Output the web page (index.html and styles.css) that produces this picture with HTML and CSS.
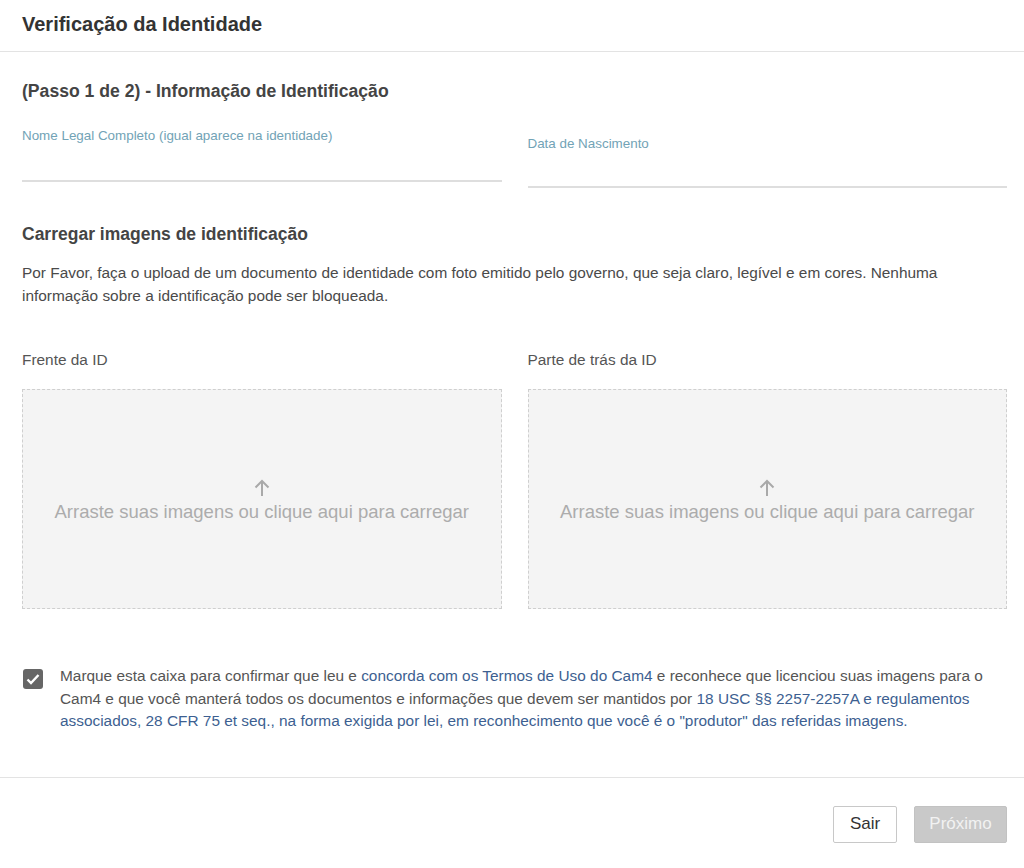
FILE: index.html
```html
<!DOCTYPE html>
<html lang="pt">
<head>
    <meta charset="utf-8">
    <title>Verificação da Identidade</title>
    <link rel="stylesheet" href="styles.css">
</head>
<body>
    <div class="modal-header">
        <h1>Verificação da Identidade</h1>
    </div>

    <div class="modal-body">
        <h2 class="step-title">(Passo 1 de 2) - Informação de Identificação</h2>

        <div class="field-row">
            <div class="field">
                <label class="field-label">Nome Legal Completo (igual aparece na identidade)</label>
                <input class="field-input" type="text">
            </div>
            <div class="field field-date">
                <label class="field-label">Data de Nascimento</label>
                <input class="field-input" type="text">
            </div>
        </div>

        <h2 class="section-title">Carregar imagens de identificação</h2>
        <p class="intro">Por Favor, faça o upload de um documento de identidade com foto emitido pelo governo, que seja claro, legível e em cores. Nenhuma informação sobre a identificação pode ser bloqueada.</p>

        <div class="upload-row">
            <div class="upload">
                <div class="upload-label">Frente da ID</div>
                <div class="dropzone">
                    <svg class="upload-icon" width="20" height="20" viewBox="0 0 20 20">
                        <path d="M10 18V3M3.5 9.5L10 3l6.5 6.5" fill="none" stroke="#a9a9a9" stroke-width="2"/>
                    </svg>
                    <span>Arraste suas imagens ou clique aqui para carregar</span>
                </div>
            </div>
            <div class="upload">
                <div class="upload-label">Parte de trás da ID</div>
                <div class="dropzone">
                    <svg class="upload-icon" width="20" height="20" viewBox="0 0 20 20">
                        <path d="M10 18V3M3.5 9.5L10 3l6.5 6.5" fill="none" stroke="#a9a9a9" stroke-width="2"/>
                    </svg>
                    <span>Arraste suas imagens ou clique aqui para carregar</span>
                </div>
            </div>
        </div>

        <div class="agree">
            <span class="checkbox">
                <svg width="16" height="16" viewBox="0 0 16 16">
                    <path d="M2.5 8.5l3.5 3.5L13.5 4" fill="none" stroke="#fff" stroke-width="2.4"/>
                </svg>
            </span>
            <p class="agree-text">Marque esta caixa para confirmar que leu e <a href="#">concorda com os Termos de Uso do Cam4</a> e reconhece que licenciou suas imagens para o Cam4 e que você manterá todos os documentos e informações que devem ser mantidos por <a href="#">18 USC §§ 2257-2257A e regulamentos associados, 28 CFR 75 et seq., na forma exigida por lei, em reconhecimento que você é o "produtor" das referidas imagens.</a></p>
        </div>
    </div>

    <div class="modal-footer">
        <button class="btn btn-exit">Sair</button>
        <button class="btn btn-next" disabled>Próximo</button>
    </div>
</body>
</html>
```

FILE: styles.css
```css
body {
    margin: 0;
    font-family: 'Liberation Sans', Arial, sans-serif;
    color: #555;
    background-color: #fff;
}

.modal-header {
    height: 51px;
    border-bottom: 1px solid #e3e3e3;
    padding-left: 22px;
    display: flex;
    align-items: center;
}

.modal-header h1 {
    margin: 0;
    font-size: 20px;
    font-weight: bold;
    color: #333;
    position: relative;
    top: -1px;
}

.modal-body {
    padding: 0 17px 0 22px;
}

.step-title {
    margin: 29px 0 0;
    font-size: 17.6px;
    line-height: 20px;
    font-weight: bold;
    color: #444;
}

.field-row {
    display: grid;
    grid-template-columns: 1fr 1fr;
    column-gap: 26px;
    margin-top: 27px;
}

.field {
    display: flex;
    flex-direction: column;
}

.field-date {
    padding-top: 8px;
}

.field-label {
    font-size: 13.4px;
    line-height: 16px;
    color: #72a3b6;
}

.field-input {
    height: 36px;
    border: none;
    border-bottom: 2px solid #dedede;
    padding: 0;
    outline: none;
    font-size: 14px;
    background: transparent;
}

.field-date .field-input {
    height: 34px;
}

.section-title {
    margin: 36px 0 0;
    font-size: 17.5px;
    line-height: 20px;
    font-weight: bold;
    color: #444;
}

.intro {
    margin: 17px 0 0;
    font-size: 15.4px;
    line-height: 23px;
    color: #4a4a4a;
}

.upload-row {
    display: grid;
    grid-template-columns: 1fr 1fr;
    column-gap: 26px;
    margin-top: 44px;
}

.upload-label {
    font-size: 15.4px;
    line-height: 18px;
    color: #555;
}

.dropzone {
    margin-top: 20px;
    padding-top: 2px;
    box-sizing: border-box;
    height: 220px;
    border: 1px dashed #cfcfcf;
    background-color: #f4f4f4;
    display: flex;
    flex-direction: column;
    align-items: center;
    justify-content: center;
    font-size: 18.5px;
    color: #acacac;
    cursor: pointer;
}

.dropzone span {
    margin-top: 3px;
}

.agree {
    display: flex;
    align-items: flex-start;
    margin-top: 56px;
}

.checkbox {
    flex: none;
    width: 20px;
    height: 20px;
    margin: 4px 0 0 1px;
    border-radius: 3px;
    background-color: #666;
    display: flex;
    align-items: center;
    justify-content: center;
}

.agree-text {
    margin: 0 0 0 17px;
    font-size: 15.4px;
    line-height: 22.5px;
    color: #555;
}

.agree-text a {
    color: #3d5f91;
    text-decoration: none;
}

.modal-footer {
    margin-top: 44px;
    border-top: 1px solid #e3e3e3;
    padding: 28px 17px 0 0;
    display: flex;
    justify-content: flex-end;
    gap: 17px;
}

.btn {
    height: 37px;
    font-family: 'Liberation Sans', Arial, sans-serif;
    font-size: 17px;
    border-radius: 2px;
    cursor: pointer;
}

.btn-exit {
    width: 64px;
    background-color: #fff;
    border: 1px solid #c8c8c8;
    color: #333;
}

.btn-next {
    width: 93px;
    background-color: #c9c9c9;
    border: 1px solid #c2c2c2;
    color: #f2f2f2;
}
```
